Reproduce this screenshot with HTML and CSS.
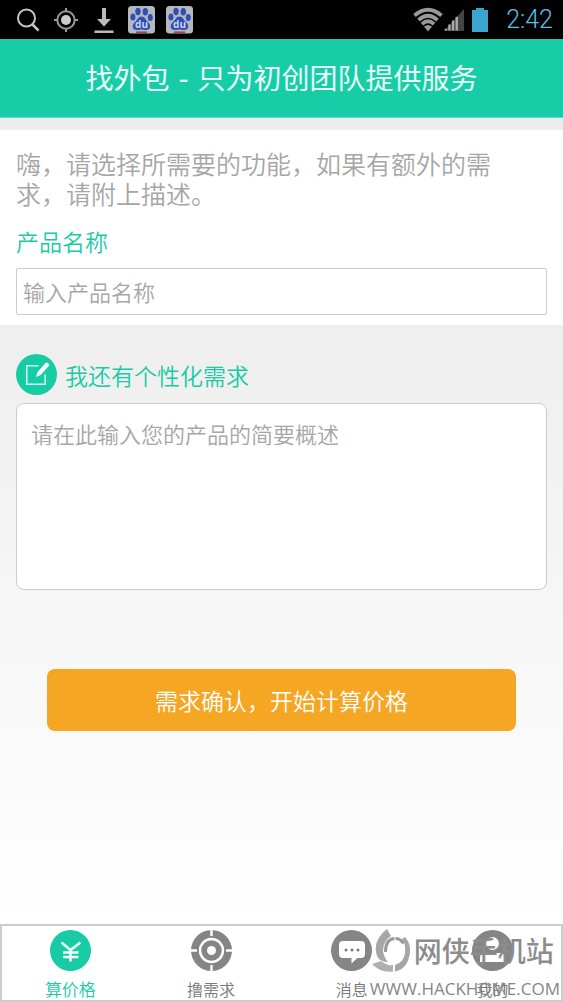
FILE: index.html
```html
<!DOCTYPE html>
<html lang="zh-CN">
<head>
<meta charset="utf-8">
<meta name="viewport" content="width=device-width, initial-scale=1">
<title>找外包</title>
<link rel="stylesheet" href="styles.css">
</head>
<body>
<div class="status">
  <div class="status-left">
    <svg class="status-icon" viewBox="0 0 28 28" fill="none" stroke="#c4c4c4" stroke-width="2"><circle cx="12.500" cy="12" r="8.500"/><path d="M18.500 18.500l6 6" stroke-width="2.500"/></svg>
    <svg class="status-icon" viewBox="0 0 28 28" fill="none" stroke="#999" stroke-width="2"><circle cx="14" cy="14" r="8.700"/><circle cx="14" cy="14" r="5" fill="#ccc" stroke="none"/><path d="M14 2v4M14 22v4M2 14h4M22 14h4"/></svg>
    <svg class="status-icon" viewBox="0 0 28 28" fill="#bbb"><path d="M12 2h4v11h5l-7 7.500L7 13h5zM4.500 24.500h19v2.500h-19z"/></svg>
    <svg class="status-icon" viewBox="0 0 28 28">
      <rect x="0" y="0" width="27" height="27.500" rx="3.500" fill="#b6b8bf"/>
      <g fill="#2f4fb5"><ellipse cx="10" cy="5.500" rx="2.700" ry="3.700"/><ellipse cx="17.300" cy="5.700" rx="2.700" ry="3.700"/><ellipse cx="4.900" cy="11" rx="2.500" ry="3.500"/><ellipse cx="22.300" cy="11.500" rx="2.500" ry="3.500"/><path d="M13.500 10.500c3.500 0 4 3.500 6.500 5.500 3.500 3 3 8-2 8-2 0-3-.5-4.500-.5s-2.500.5-4.500.5c-5 0-5.500-5-2-8 2.500-2 3-5.500 6.500-5.500z"/></g>
      <text class="paw-text" x="13.500" y="21.500" text-anchor="middle" fill="#cdd3e8">du</text>
      <path d="M8 26.200h11" stroke="#a8404c" stroke-width="1.500"/>
    </svg>
    <svg class="status-icon" viewBox="0 0 28 28">
      <rect x="0" y="0" width="27" height="27.500" rx="3.500" fill="#b6b8bf"/>
      <g fill="#2f4fb5"><ellipse cx="10" cy="5.500" rx="2.700" ry="3.700"/><ellipse cx="17.300" cy="5.700" rx="2.700" ry="3.700"/><ellipse cx="4.900" cy="11" rx="2.500" ry="3.500"/><ellipse cx="22.300" cy="11.500" rx="2.500" ry="3.500"/><path d="M13.500 10.500c3.500 0 4 3.500 6.500 5.500 3.500 3 3 8-2 8-2 0-3-.5-4.500-.5s-2.500.5-4.500.5c-5 0-5.500-5-2-8 2.500-2 3-5.500 6.500-5.500z"/></g>
      <text class="paw-text" x="13.500" y="21.500" text-anchor="middle" fill="#cdd3e8">du</text>
      <path d="M8 26.200h11" stroke="#a8404c" stroke-width="1.500"/>
    </svg>
  </div>
  <div class="status-right">
    <svg class="wifi" viewBox="0 0 32 26" fill="none" stroke="#999" stroke-width="3.800"><path d="M2.500 8.500Q16-3 29.500 8.500M6.500 13Q16 4.500 25.500 13M10 17.200Q16 11.500 22 17.200"/><path d="M16 24.500l-4-5q4-3 8 0z" fill="#999" stroke="none"/></svg>
    <svg class="signal" viewBox="0 0 22 26"><path d="M0 25L22 1v24z" fill="#444"/><path d="M2 24.500v-2M6 24.500v-6.500M10 24.500v-11M14 24.500v-15" stroke="#aaa" stroke-width="2.600"/></svg>
    <svg class="battery" viewBox="0 0 16 26"><path d="M0 3h4V1h8v2h4v22H0z" fill="#3ba5cf"/></svg>
    <span class="clock">2:42</span>
  </div>
</div>
<header class="title-bar"><h1 class="title">找外包 - 只为初创团队提供服务</h1></header>
<main class="main">
  <section class="intro">
    <p class="hint">嗨，请选择所需要的功能，如果有额外的需求，请附上描述。</p>
    <label class="label" for="name">产品名称</label>
    <input class="field" id="name" type="text" placeholder="输入产品名称">
  </section>
  <section class="custom">
    <div class="custom-head">
      <svg class="edit" viewBox="0 0 40 40"><circle cx="20" cy="20" r="20" fill="#17cba5"/><path d="M22 11.500H10.500v18h18V20" fill="none" stroke="#c9fff1" stroke-width="1.600"/><path d="M19.500 22.500l1.500-5 7.500-8.500q1.500-1.500 3 0t.3 3L24 20.500z" fill="#f2fffb"/></svg>
      <label class="label" for="desc">我还有个性化需求</label>
    </div>
    <textarea class="area" id="desc" placeholder="请在此输入您的产品的简要概述"></textarea>
  </section>
  <button class="submit" type="button">需求确认，开始计算价格</button>
</main>
<nav class="tabs">
  <a class="tab active" href="#price">
    <svg class="tab-icon" viewBox="0 0 41 41"><circle cx="20.500" cy="20.500" r="20.500" fill="currentColor"/><path d="M11.500 12.500l9 7.500 10-7.500M20.500 19v12.500M13 22.500h15.500M13 27h15.500" fill="none" stroke="#effffa" stroke-width="2.600"/></svg>
    <span>算价格</span>
  </a>
  <a class="tab" href="#demand">
    <svg class="tab-icon" viewBox="0 0 41 41" fill="none" stroke="#fff"><circle cx="20.500" cy="20.500" r="20.500" fill="#858585" stroke="none"/><circle cx="20.500" cy="20.500" r="11.500" stroke-width="2.400"/><path d="M20.500 0v6M20.500 35v6M0 20.500h6M35 20.500h6" stroke-width="2.400"/><circle cx="20.500" cy="20.500" r="4.500" fill="#fff" stroke="none"/></svg>
    <span>撸需求</span>
  </a>
  <a class="tab" href="#messages">
    <svg class="tab-icon" viewBox="0 0 41 41"><circle cx="20.500" cy="20.500" r="20.500" fill="#858585"/><path d="M12 11h18q4 0 4 4v9q0 4-4 4h-3.500l-6 5.500V28H12q-4 0-4-4v-9q0-4 4-4z" fill="#fff"/><g fill="#777"><circle cx="15" cy="20" r="1.500"/><circle cx="21" cy="20" r="1.500"/><circle cx="27" cy="20" r="1.500"/></g></svg>
    <span>消息</span>
  </a>
  <a class="tab" href="#mine">
    <svg class="tab-icon" viewBox="0 0 41 41"><circle cx="20.500" cy="20.500" r="20.500" fill="#858585"/><circle cx="20.500" cy="13.500" r="6.500" fill="#fff"/><path d="M8 32v-4q0-5 6-5h13q6 0 6 5v4z" fill="#fff"/></svg>
    <span>我的</span>
  </a>
  <div class="watermark">
    <div class="mark-row">
      <svg class="mark-logo" viewBox="0 0 42 44"><path d="M17 1l4 7Q13 13 13 23q1 7 5 11-8 0-11-6Q2 13 17 1z" fill="#a6a6a6"/><path d="M2 36l9-3q6 5 12 4v6.500Q10 45 2 36z" fill="#b0b0b0"/><path d="M35 9q6 7 5 15-2 17-15 19.500V37q9-3 10-12 1-9-3-14z" fill="#a6a6a6"/><path d="M15.500 24q0-13 9-13.500M25.500 10.500q5 0 8 5" fill="none" stroke="#999" stroke-width="3"/></svg>
      <span class="mark-name">网侠手机站</span>
    </div>
    <span class="mark-url">WWW.HACKHOME.COM</span>
  </div>
</nav>
</body>
</html>
```
FILE: styles.css
```css
* { box-sizing: border-box; }
body {
  margin: 0;
  min-height: 100vh;
  display: flex;
  flex-direction: column;
  font-family: "Noto Sans CJK SC", sans-serif;
  font-weight: 350;
  color: #a6a6a6;
  background: #fff;
}
.status {
  display: flex;
  justify-content: space-between;
  align-items: center;
  height: 39px;
  padding: 0 10px 0 14px;
  background: #000;
}
.status-left { display: flex; gap: 10px; }
.status-icon { width: 28px; height: 28px; }
.status-right { display: flex; align-items: center; }
.wifi { width: 32px; height: 26px; }
.signal { width: 20px; height: 26px; margin-right: 8px; }
.battery { width: 16px; height: 26px; margin-right: 18px; }
.clock { font: 300 25px/38px Roboto, sans-serif; color: #5bbfe6; }
.paw-text { font: bold 10px "Open Sans", sans-serif; }
.title-bar {
  height: 79px;
  display: flex;
  align-items: center;
  justify-content: center;
  padding-top: 4px;
  background: #17cda7;
  border-bottom: 1px solid #5fdcc3;
}
.title {
  margin: 0;
  font-family: "DejaVu Sans", "Noto Sans CJK SC", sans-serif;
  font-size: 28px;
  line-height: 40px;
  font-weight: 400;
  color: #eafffa;
}
.main {
  flex: 1;
  display: flex;
  flex-direction: column;
  padding-top: 12px;
  background: linear-gradient(#ececec, #eee 25%, #fff);
}
.intro { display: flex; flex-direction: column; padding: 18px 16px 10px; background: #fff; }
.hint { margin: 0 40px 18px 0; font-size: 25px; line-height: 30px; }
.label { font-size: 23px; line-height: 30px; color: #17cba5; }
.field, .area {
  width: 100%;
  border: 1px solid #ccc;
  background: #fff;
  font: inherit;
  font-size: 22px;
  line-height: 30px;
  color: #666;
}
.field { height: 47px; margin-top: 12px; padding: 0 6px 2px; border-radius: 2px; }
.area { display: block; height: 187px; padding: 14px; border-radius: 8px; resize: none; }
.field::placeholder, .area::placeholder { color: #a6a6a6; opacity: 1; }
.custom { padding: 29px 16px 0; }
.custom-head { display: flex; align-items: center; gap: 8px; margin-bottom: 8px; }
.edit { width: 41px; height: 41px; }
.submit {
  margin: 79px 47px 0;
  height: 62px;
  border: 0;
  border-radius: 8px;
  background: #f5a623;
  color: #fff;
  font: inherit;
  font-size: 23px;
}
.tabs {
  position: relative;
  display: flex;
  height: 78px;
  box-shadow: inset 0 0 0 2px #ccc;
  background: #fff;
}
.tab {
  flex: 1;
  display: flex;
  flex-direction: column;
  align-items: center;
  gap: 6px;
  padding-top: 6px;
  font-size: 16px;
  line-height: 24px;
  color: #777;
  text-decoration: none;
}
.active { color: #17cba5; font-size: 17px; }
.tab-icon { width: 41px; height: 41px; }
.watermark { position: absolute; right: 3px; top: 4px; color: #858585; }
.mark-row { display: flex; align-items: center; gap: 2px; }
.mark-logo { width: 42px; height: 44px; }
.mark-name { font-size: 28px; line-height: 44px; font-weight: 500; color: #8c8c8c; }
.mark-url { display: block; font: 400 17px/34px "Open Sans", sans-serif; }
```
